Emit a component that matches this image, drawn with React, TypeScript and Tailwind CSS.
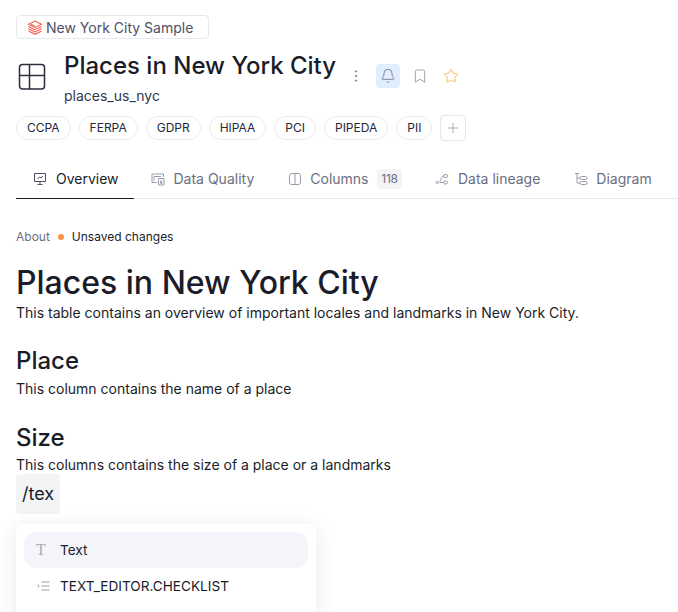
import { Bell, Bookmark, MoreVertical, Plus, Star } from "lucide-react";

const tags = ["CCPA", "FERPA", "GDPR", "HIPAA", "PCI", "PIPEDA", "PII"];

function TabIcon({ children }: { children: React.ReactNode }) {
  return (
    <svg viewBox="0 0 14 14" className="h-3.5 w-3.5 shrink-0 fill-none stroke-current" strokeWidth="1">
      {children}
    </svg>
  );
}

const tabs = [
  {
    label: "Overview",
    active: true,
    icon: (
      <TabIcon>
        <path d="M1.5 1.5h11v8h-11zM7 9.5V12.500M4.500 12.500h5M4.500 7l2-2 1.500 1 2-2" />
      </TabIcon>
    ),
  },
  {
    label: "Data Quality",
    icon: (
      <TabIcon>
        <path d="M1 10.500V2h11.500v3M1 10.500h5M3 4.500h7M3 4.500v4M7.500 6.500h5.500V13H7.500zM9.700 9h1.200v2.500H9.700z" />
      </TabIcon>
    ),
  },
  {
    label: "Columns",
    badge: "118",
    icon: (
      <TabIcon>
        <rect x="1.500" y="1.500" width="11" height="11" rx="2" />
        <path d="M7 1.500v11" />
      </TabIcon>
    ),
  },
  {
    label: "Data lineage",
    icon: (
      <TabIcon>
        <path d="M3.500 10.500C6 10.500 5.800 4 8.500 4M5 10.500h3.500" />
        <rect x="1" y="9.500" width="2.500" height="2" rx="1" />
        <rect x="8.500" y="2.500" width="4" height="3" rx="1.500" />
        <rect x="8.500" y="9" width="4" height="3" rx="1.500" />
      </TabIcon>
    ),
  },
  {
    label: "Diagram",
    icon: (
      <TabIcon>
        <path d="M1 1.500h4M3 1.500v9.500h3M3 6h3" />
        <rect x="6" y="4.500" width="7" height="3" rx="1.500" />
        <rect x="6" y="9.500" width="7" height="3" rx="1.500" />
      </TabIcon>
    ),
  },
];

export default function App() {
  return (
    <div
      className="h-[612px] w-[678px] overflow-hidden bg-white pt-[15px] pl-4 text-[#1a1d29]"
      style={{ fontFamily: "Inter, 'Liberation Sans', sans-serif" }}
    >
      {/* breadcrumb tag */}
      <div className="flex h-6 w-[193px] items-center gap-[3px] rounded border border-[#e8e9ed] pt-px pl-[10px] text-sm text-[#4d5066]">
        <svg viewBox="0 0 16 16" className="h-4 w-4 shrink-0 fill-none stroke-[#f0604d]" strokeWidth="1.100">
          <path d="M8 1l6.500 3.200L8 7.400 1.500 4.200z" />
          <path d="M4 4.200l4 2M1.500 6.500L8 9.700l6.500-3.200M1.500 8.800L8 12l6.500-3.200M1.500 11.100L8 14.300l6.500-3.200" />
        </svg>
        New York City Sample
      </div>

      {/* title */}
      <div className="mt-[11px] flex">
        <svg viewBox="0 0 30 30" className="mt-3 h-[30px] w-[30px] shrink-0 fill-none stroke-[#2b2e3d]" strokeWidth="1.500">
          <rect x="3.500" y="2.500" width="25" height="24.500" rx="3" />
          <path d="M3.500 13.500h25M13.500 2.500v24.500" />
        </svg>
        <div className="ml-[18px]">
          <h1 className="text-2xl leading-8 font-medium">Places in New York City</h1>
          <p className="mt-1 text-sm leading-5 text-[#33364a]">places_us_nyc</p>
        </div>
        <div className="mt-[14px] ml-3 flex h-6 items-center">
          <MoreVertical className="h-4 w-4 text-[#7d8094]" strokeWidth={1.5} />
          <div className="ml-3 flex h-6 w-6 items-center justify-center rounded bg-[#e1eeff]">
            <Bell className="h-4 w-4 text-[#6f7488]" strokeWidth={1.25} />
          </div>
          <Bookmark className="ml-3 h-4 w-4 text-[#8d90a1]" strokeWidth={1.25} />
          <Star className="ml-[15px] h-4 w-4 text-[#f5c15c]" strokeWidth={1.5} />
        </div>
      </div>

      {/* tags */}
      <div className="mt-[9px] flex items-center gap-2">
        {tags.map((t) => (
          <span
            key={t}
            className="flex h-6 items-center rounded-full border border-[#ebecef] px-[10px] text-xs text-[#25283a]"
          >
            {t}
          </span>
        ))}
        <button className="flex h-[26px] w-[26px] items-center justify-center rounded border border-[#e4e5ea] text-[#a9abb8]">
          <Plus className="h-4 w-4" strokeWidth={1.5} />
        </button>
      </div>

      {/* tabs */}
      <div className="mt-5 flex h-[38px] border-b border-[#e9eaed]">
        {tabs.map((tab) => (
          <div
            key={tab.label}
            className={
              tab.active
                ? "-mb-px flex w-[118px] items-center gap-[9px] border-b border-[#1a1d29] pb-[2px] pl-[17px] text-sm text-[#1a1d29]"
                : "ml-[17px] flex items-center gap-[8.5px] pr-[16.5px] pb-[2px] text-sm text-[#6b6e80]"
            }
          >
            <span className={tab.active ? "text-[#4d5066]" : "text-[#9a9cab]"}>{tab.icon}</span>
            <span>{tab.label}</span>
            {tab.badge && (
              <span className="flex h-5 w-[25px] items-center justify-center rounded bg-[#f3f4f6] text-xs tracking-tight text-[#6b6e80]">
                {tab.badge}
              </span>
            )}
          </div>
        ))}
      </div>

      {/* about */}
      <div className="mt-[30px] flex items-center text-xs">
        <span className="text-[#6b6e80]">About</span>
        <span className="mx-2 h-1.5 w-1.5 rounded-full bg-[#f59342]" />
        <span>Unsaved changes</span>
      </div>

      {/* editor content */}
      <h2 className="mt-[18px] text-[32px] leading-10 font-medium">Places in New York City</h2>
      <p className="text-sm leading-5">This table contains an overview of important locales and landmarks in New York City.</p>
      <h3 className="mt-[22px] text-2xl leading-8 font-medium">Place</h3>
      <p className="mt-[2px] text-sm leading-5">This column contains the name of a place</p>
      <h3 className="mt-[23px] text-2xl leading-8 font-medium">Size</h3>
      <p className="mt-px text-sm leading-5">This columns contains the size of a place or a landmarks</p>
      <div className="-mt-px flex h-10 w-11 items-center justify-center rounded bg-[#f3f4f6] text-lg">/tex</div>

      {/* slash menu */}
      <div className="mt-[10px] h-[120px] w-[300px] rounded-lg bg-white p-2 shadow-[0_4px_20px_rgba(30,35,60,0.10)]">
        <div className="flex h-9 items-center rounded-xl bg-[#f4f5fa] pl-3 text-[13.6px]">
          <span className="w-6 text-base text-[#a9abb8]" style={{ fontFamily: "'Liberation Serif', serif" }}>
            T
          </span>
          Text
        </div>
        <div className="flex h-9 items-center pl-3 text-[13.6px]">
          <svg viewBox="0 0 14 14" className="mr-[10px] h-3.5 w-3.5 fill-none stroke-[#9a9cab]" strokeWidth="1">
            <path d="M5.500 3h8M5.500 7h8M5.500 11h8M2 5.500l1 1.500-1 1.500" />
          </svg>
          TEXT_EDITOR.CHECKLIST
        </div>
      </div>
    </div>
  );
}
